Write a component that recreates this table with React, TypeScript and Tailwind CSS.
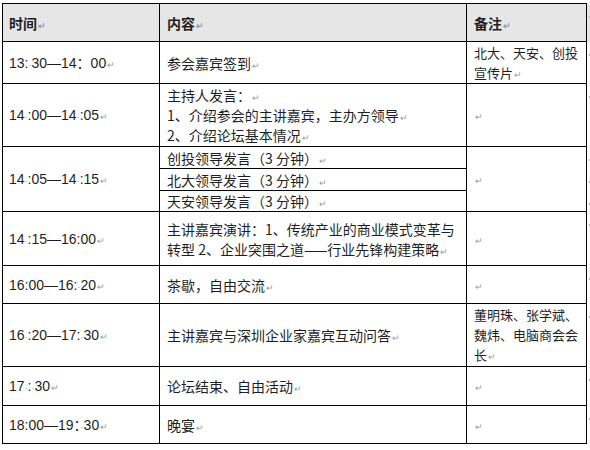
import React from "react";

const Mark = () => <span className="ml-[1px] text-[9px] leading-none text-[#9a9a9a]">↵</span>;
const Dot = () => <span className="text-[9px] leading-none text-[#9a9a9a]">·</span>;

const td = "border border-black align-middle p-0";
const timeCell = `${td} pl-[6px] font-['Liberation_Sans','Noto_Sans_CJK_SC',sans-serif] text-[14px]`;
const contentCell = `${td} pl-[7px] whitespace-nowrap`;
const noteCell = `${td} pl-[7px] whitespace-nowrap text-[13px] leading-[20px]`;

// tiny row-end marks that sit past the right edge of the table
const EndCell = () => (
  <td className="p-0 align-top">
    <span className="block mt-[12px] ml-[2px] w-[2px] h-[2px] bg-[#b8b8b8]" />
  </td>
);

export default function App() {
  return (
    <div className="w-[590px] h-[450px] bg-white pt-[3px] pl-[2px] overflow-hidden font-['Noto_Sans_CJK_SC',sans-serif] text-[14px] leading-[20px] text-[#1f1f1f]">
      <table className="border-collapse table-fixed w-[588px]">
        <colgroup>
          <col className="w-[157px]" />
          <col className="w-[307px]" />
          <col className="w-[120px]" />
          <col className="w-[4px]" />
        </colgroup>
        <tbody>
          <tr className="h-[38px] bg-[#e6e6e6]">
            <td className={`${td} pl-[6px] font-bold`}>时间<Mark /></td>
            <td className={`${td} pl-[7px] font-bold`}>内容<Mark /></td>
            <td className={`${td} pl-[7px] font-bold`}>备注<Mark /></td>
            <EndCell />
          </tr>
          <tr className="h-[42px]">
            <td className={timeCell}>13:<Dot />30—14：00<Mark /></td>
            <td className={contentCell}>参会嘉宾签到<Mark /></td>
            <td className={`${noteCell} leading-[19px]`}>北大、天安、创投<br />宣传片<Mark /></td>
            <EndCell />
          </tr>
          <tr className="h-[63px]">
            <td className={timeCell}>14<Dot />:00—14<Dot />:05<Mark /></td>
            <td className={contentCell}>
              主持人发言：<Mark /><br />
              1、介绍参会的主讲嘉宾，主办方领导<Mark /><br />
              2、介绍论坛基本情况<Mark />
            </td>
            <td className={noteCell}><Mark /></td>
            <EndCell />
          </tr>
          <tr className="h-[22px]">
            <td rowSpan={3} className={timeCell}>14<Dot />:05—14<Dot />:15<Mark /></td>
            <td className={contentCell}>创投领导发言（3 分钟）<Mark /></td>
            <td rowSpan={3} className={noteCell}><Mark /></td>
            <EndCell />
          </tr>
          <tr className="h-[22px]">
            <td className={contentCell}>北大领导发言（3 分钟）<Mark /></td>
            <EndCell />
          </tr>
          <tr className="h-[21px]">
            <td className={contentCell}>天安领导发言（3 分钟）<Mark /></td>
            <EndCell />
          </tr>
          <tr className="h-[54px]">
            <td className={timeCell}>14<Dot />:15—16:00<Mark /></td>
            <td className={contentCell}>
              主讲嘉宾演讲：1、传统产业的商业模式变革与<br />
              转型 2、企业突围之道——行业先锋构建策略<Mark />
            </td>
            <td className={noteCell}><Mark /></td>
            <EndCell />
          </tr>
          <tr className="h-[38px]">
            <td className={timeCell}>16:00—16:<Dot />20<Mark /></td>
            <td className={contentCell}>茶歇，自由交流<Mark /></td>
            <td className={noteCell}><Mark /></td>
            <EndCell />
          </tr>
          <tr className="h-[63px]">
            <td className={timeCell}>16<Dot />:20—17:<Dot />30<Mark /></td>
            <td className={contentCell}>主讲嘉宾与深圳企业家嘉宾互动问答<Mark /></td>
            <td className={noteCell}>董明珠、张学斌、<br />魏炜、电脑商会会<br />长<Mark /></td>
            <EndCell />
          </tr>
          <tr className="h-[39px]">
            <td className={timeCell}>17<Dot />:<Dot />30<Mark /></td>
            <td className={contentCell}>论坛结束、自由活动<Mark /></td>
            <td className={noteCell}><Mark /></td>
            <EndCell />
          </tr>
          <tr className="h-[38px]">
            <td className={timeCell}>18:00—19：<Dot />30<Mark /></td>
            <td className={contentCell}>晚宴<Mark /></td>
            <td className={noteCell}><Mark /></td>
            <EndCell />
          </tr>
        </tbody>
      </table>
    </div>
  );
}
